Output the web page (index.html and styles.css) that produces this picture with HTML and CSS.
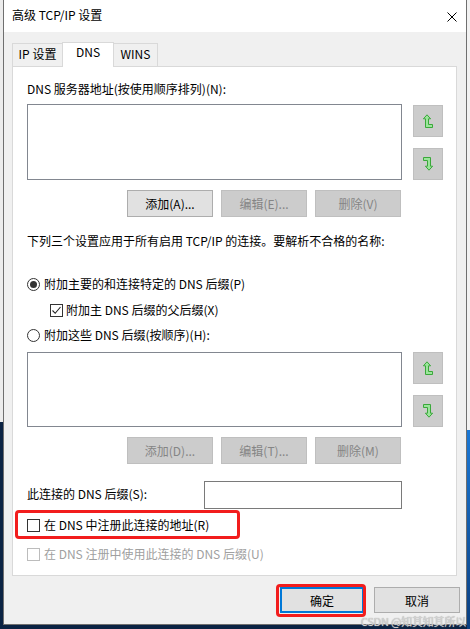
FILE: index.html
```html
<!DOCTYPE html>
<html>
<head>
<meta charset="utf-8">
<title>高级 TCP/IP 设置</title>
<link rel="stylesheet" href="styles.css">
</head>
<body>
<div class="dialog">
  <div class="titlebar">
    <span class="title">高级 TCP/IP 设置</span>
    <svg class="close" width="10" height="10" viewBox="0 0 10 10"><path d="M0.5 0.5 L9.5 9.5 M9.5 0.5 L0.5 9.5" stroke="#000" stroke-width="1" fill="none"/></svg>
  </div>

  <div class="content">
    <div class="tabs">
      <div class="tab tab-ip">IP 设置</div>
      <div class="tab tab-dns selected">DNS</div>
      <div class="tab tab-wins">WINS</div>
    </div>

    <div class="panel">
      <div class="label first">DNS 服务器地址(按使用顺序排列)(N):</div>

      <div class="listrow list1">
        <div class="listbox"></div>
        <div class="sidebtns">
          <div class="iconbtn">
            <svg width="10" height="15" viewBox="0 0 10 15"><polygon points="4,0.8 7.6,4.8 5.5,4.8 5.5,10.5 9.5,10.5 9.5,13.5 2.5,13.5 2.5,4.8 0.4,4.8" fill="#9be59b" stroke="#3aa83a" stroke-width="1"/></svg>
          </div>
          <div class="iconbtn">
            <svg width="10" height="15" viewBox="0 0 10 15"><polygon points="0.5,0.5 7.5,0.5 7.5,9.2 9.6,9.2 6,13.2 2.4,9.2 4.5,9.2 4.5,3.5 0.5,3.5" fill="#9be59b" stroke="#3aa83a" stroke-width="1"/></svg>
          </div>
        </div>
      </div>

      <div class="btnrow">
        <button class="btn">添加(A)...</button>
        <button class="btn disabled">编辑(E)...</button>
        <button class="btn disabled">删除(V)</button>
      </div>

      <div class="label note">下列三个设置应用于所有启用 TCP/IP 的连接。要解析不合格的名称:</div>

      <div class="option radio-row1">
        <span class="radio checked"></span>
        <span>附加主要的和连接特定的 DNS 后缀(P)</span>
      </div>

      <div class="option check-row indent">
        <span class="checkbox">
          <svg width="11" height="11" viewBox="0 0 11 11"><path d="M1.5 5.5 L4.2 8.3 L9.5 2" stroke="#222" stroke-width="1.1" fill="none"/></svg>
        </span>
        <span>附加主 DNS 后缀的父后缀(X)</span>
      </div>

      <div class="option radio-row2">
        <span class="radio"></span>
        <span>附加这些 DNS 后缀(按顺序)(H):</span>
      </div>

      <div class="listrow list2">
        <div class="listbox"></div>
        <div class="sidebtns">
          <div class="iconbtn">
            <svg width="10" height="15" viewBox="0 0 10 15"><polygon points="4,0.8 7.6,4.8 5.5,4.8 5.5,10.5 9.5,10.5 9.5,13.5 2.5,13.5 2.5,4.8 0.4,4.8" fill="#9be59b" stroke="#3aa83a" stroke-width="1"/></svg>
          </div>
          <div class="iconbtn">
            <svg width="10" height="15" viewBox="0 0 10 15"><polygon points="0.5,0.5 7.5,0.5 7.5,9.2 9.6,9.2 6,13.2 2.4,9.2 4.5,9.2 4.5,3.5 0.5,3.5" fill="#9be59b" stroke="#3aa83a" stroke-width="1"/></svg>
          </div>
        </div>
      </div>

      <div class="btnrow">
        <button class="btn disabled">添加(D)...</button>
        <button class="btn disabled">编辑(T)...</button>
        <button class="btn disabled">删除(M)</button>
      </div>

      <div class="suffixrow">
        <span>此连接的 DNS 后缀(S):</span>
        <div class="textbox"></div>
      </div>

      <div class="option register-row marked">
        <span class="checkbox"></span>
        <span>在 DNS 中注册此连接的地址(R)</span>
      </div>

      <div class="option use-row off">
        <span class="checkbox"></span>
        <span>在 DNS 注册中使用此连接的 DNS 后缀(U)</span>
      </div>
    </div>
  </div>

  <div class="footer">
    <button class="btn default marked">确定</button>
    <button class="btn">取消</button>
  </div>

  <div class="watermark">CSDN @知其知其所以</div>
</div>
</body>
</html>
```

FILE: styles.css
```css
html, body {
  margin: 0;
  height: 100%;
}

body {
  /* desktop behind the dialog */
  background:
    linear-gradient(#f2f2f2 0, #f2f2f2 430px, #1a78d6 430px, #0b3f80 629px) right top / 3px 100% no-repeat,
    linear-gradient(#ececec 0, #ececec 422px, #0b2343 422px);
  font-family: "Noto Sans CJK SC", "Microsoft YaHei", sans-serif;
  font-size: 12px;
  line-height: 16px;
  color: #000;
  overflow: hidden;
}

.dialog {
  position: relative;
  margin-left: 3px;
  width: 464px;
  height: 625px;
  box-sizing: border-box;
  border: 1px solid #6f6f6f;
  border-top: none;
  background: #f0f0f0;
}

/* title bar */
.titlebar {
  height: 32px;
  background: #fff;
  display: flex;
  align-items: center;
  justify-content: space-between;
  padding: 0 9px 0 8px;
}

.title {
  margin-top: -2px;
}

.close {
  display: block;
  margin-top: 2px;
}

.content {
  padding: 10px 9px 0 8px;
}

/* tabs */
.tabs {
  display: flex;
  align-items: flex-end;
  height: 25px;
  margin-bottom: -1px;
  position: relative;
  z-index: 1;
}

.tab {
  box-sizing: border-box;
  height: 24px;
  border: 1px solid #d9d9d9;
  background: #f0f0f0;
  padding-top: 2px;
  text-align: center;
}

.tab-ip { width: 51px; margin-right: -1px; }
.tab-dns { width: 52px; margin-right: -1px; }
.tab-wins { width: 45px; }

.tab.selected {
  height: 25px;
  background: #fff;
  border-bottom: none;
  padding-top: 1px;
  position: relative;
}

.panel {
  box-sizing: border-box;
  height: 510px;
  border: 1px solid #d9d9d9;
  background: #fff;
  padding: 14px 13px 0 14px;
}

.label.note { margin-top: 16px; }

.listrow {
  display: flex;
  gap: 11px;
}

.list1 { margin-top: 7px; height: 76px; }
.list2 { margin-top: 9px; height: 75px; }

.listbox {
  flex: 1;
  border: 1px solid #828790;
  background: #fff;
}

.sidebtns {
  width: 30px;
  display: flex;
  flex-direction: column;
  gap: 11px;
}

.list1 .sidebtns { padding-top: 1px; }

.iconbtn {
  box-sizing: border-box;
  height: 32px;
  background: #cccccc;
  border: 1px solid #bfbfbf;
  display: flex;
  align-items: center;
  justify-content: center;
}

.btnrow {
  display: flex;
  justify-content: flex-end;
  gap: 8px;
  padding-right: 42px;
  margin-top: 10px;
}

.btn {
  box-sizing: border-box;
  width: 86px;
  height: 27px;
  border: 1px solid #adadad;
  background: #e1e1e1;
  color: #000;
  font-family: inherit;
  font-size: 12px;
  padding: 0;
}

.btn.disabled {
  background: #cccccc;
  border-color: #bfbfbf;
  color: #858585;
}

/* radios and checkboxes */
.option {
  display: flex;
  align-items: center;
  gap: 4px;
  height: 16px;
}

.radio-row1 { margin-top: 27px; }
.check-row { margin-top: 10px; }
.radio-row2 { margin-top: 9px; }
.indent { padding-left: 23px; gap: 3px; }

.radio {
  box-sizing: border-box;
  width: 13px;
  height: 13px;
  border: 1px solid #333;
  border-radius: 50%;
  display: flex;
  align-items: center;
  justify-content: center;
}

.radio.checked::after {
  content: "";
  width: 7px;
  height: 7px;
  border-radius: 50%;
  background: #333;
}

.checkbox {
  box-sizing: border-box;
  width: 13px;
  height: 13px;
  border: 1px solid #333;
  display: flex;
  align-items: center;
  justify-content: center;
}

.suffixrow {
  display: flex;
  align-items: center;
  justify-content: space-between;
  padding-right: 41px;
  margin-top: 17px;
  height: 28px;
}

.suffixrow span { margin-top: -3px; }

.textbox {
  box-sizing: border-box;
  width: 198px;
  height: 28px;
  border: 1px solid #7a7a7a;
  background: #fff;
}

.register-row { margin-top: 8px; }
.use-row { margin-top: 13px; }

.off { color: #a0a0a0; }
.off .checkbox { border-color: #bcbcbc; }

/* red annotation frames */
.marked { position: relative; }

.register-row.marked::after {
  content: "";
  position: absolute;
  left: -12px;
  top: -7px;
  width: 225px;
  height: 29px;
  border: 3px solid #f21d1d;
  border-radius: 4px;
  box-sizing: border-box;
}

.footer {
  display: flex;
  justify-content: flex-end;
  gap: 10px;
  padding-right: 6px;
  margin-top: 11px;
}

.footer .btn {
  width: 86px;
  height: 26px;
}

.btn.default {
  width: 84px;
  border-color: #0078d7;
  box-shadow: inset 0 0 0 1px #0078d7;
}

.btn.default.marked::after {
  content: "";
  position: absolute;
  left: -5px;
  top: -4px;
  right: -3px;
  bottom: -5px;
  border: 3px solid #f21d1d;
  border-radius: 4px;
}

.watermark {
  position: absolute;
  right: 0;
  bottom: -3px;
  font-size: 11px;
  line-height: 12px;
  color: #d4d4d4;
  text-shadow: 0 0 1px #9a9a9a;
  letter-spacing: -0.2px;
}
```
